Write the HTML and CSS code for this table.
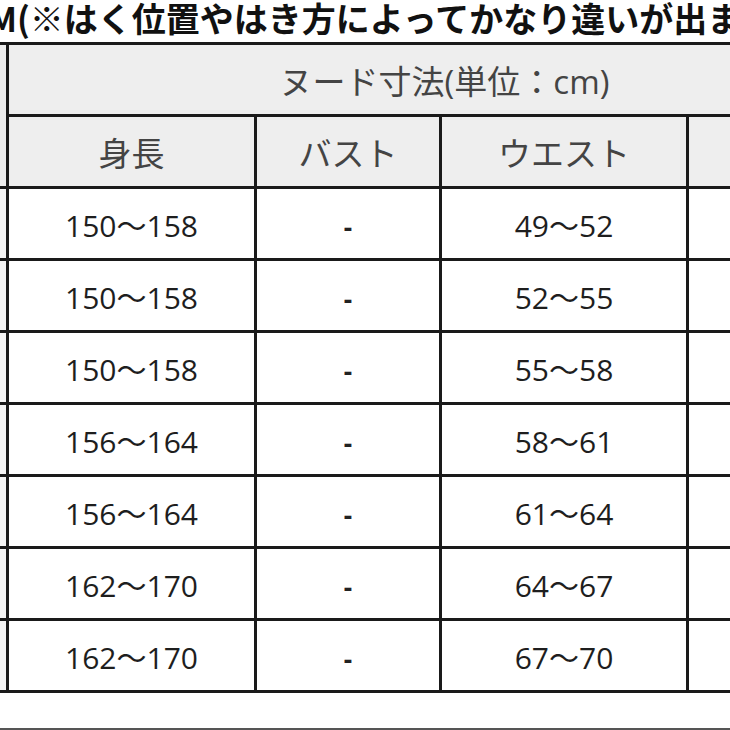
FILE: index.html
```html
<!DOCTYPE html>
<html lang="ja">
<head>
<meta charset="utf-8">
<link rel="stylesheet" href="styles.css">
</head>
<body>
<div class="page">
  <div class="title">M(※はく位置やはき方によってかなり違いが出ます)</div>
  <table class="sizes">
    <colgroup>
      <col class="c-size">
      <col class="c-height">
      <col class="c-bust">
      <col class="c-waist">
      <col class="c-hip">
    </colgroup>
    <thead>
      <tr>
        <th class="blank" rowspan="2"></th>
        <th class="group" colspan="4">ヌード寸法(単位：cm)</th>
      </tr>
      <tr>
        <th>身長</th>
        <th>バスト</th>
        <th>ウエスト</th>
        <th>ヒップ</th>
      </tr>
    </thead>
    <tbody>
      <tr><td class="blank"></td><td>150〜158</td><td class="dash">-</td><td>49〜52</td><td>76〜80</td></tr>
      <tr><td class="blank"></td><td>150〜158</td><td class="dash">-</td><td>52〜55</td><td>78〜82</td></tr>
      <tr><td class="blank"></td><td>150〜158</td><td class="dash">-</td><td>55〜58</td><td>80〜84</td></tr>
      <tr><td class="blank"></td><td>156〜164</td><td class="dash">-</td><td>58〜61</td><td>82〜86</td></tr>
      <tr><td class="blank"></td><td>156〜164</td><td class="dash">-</td><td>61〜64</td><td>84〜88</td></tr>
      <tr><td class="blank"></td><td>162〜170</td><td class="dash">-</td><td>64〜67</td><td>86〜90</td></tr>
      <tr><td class="blank"></td><td>162〜170</td><td class="dash">-</td><td>67〜70</td><td>88〜92</td></tr>
    </tbody>
  </table>
  <div class="edge"></div>
</div>
</body>
</html>
```
FILE: styles.css
```css
html, body {
  margin: 0;
  padding: 0;
  background: #ffffff;
}
.page {
  width: 730px;
  height: 730px;
  overflow: hidden;
  position: relative;
}
.title {
  height: 42px;
  margin-left: -12px;
  white-space: nowrap;
  font-family: "Noto Sans CJK JP", sans-serif;
  font-weight: 700;
  font-size: 34px;
  line-height: 36px;
  color: #111111;
}
.sizes {
  margin-left: -242px;
  border-collapse: collapse;
  table-layout: fixed;
  width: 1122px;
  border: 3px solid #1a1a1a;
  font-family: "Open Sans", "Noto Sans CJK JP", sans-serif;
}
.c-size { width: 248px; }
.c-height { width: 248px; }
.c-bust { width: 185px; }
.c-waist { width: 247px; }
.c-hip { width: 194px; }
.sizes th, .sizes td {
  border: 3px solid #1a1a1a;
  height: 69px;
  padding: 0;
  text-align: center;
  vertical-align: middle;
}
.sizes th {
  background: #eeeeee;
  color: #444444;
  font-weight: 400;
  font-size: 33px;
}
.sizes td {
  color: #1e1e1e;
  font-size: 30px;
  background: #ffffff;
}
.sizes td.dash {
  font-weight: 700;
  font-size: 26px;
  height: 63px;
  padding-top: 6px;
  color: #222222;
}
.sizes td.blank {
  background: #f5f5f5;
}
.edge {
  position: absolute;
  left: 0;
  right: 0;
  bottom: 0;
  height: 2px;
  background: #555555;
}
```
